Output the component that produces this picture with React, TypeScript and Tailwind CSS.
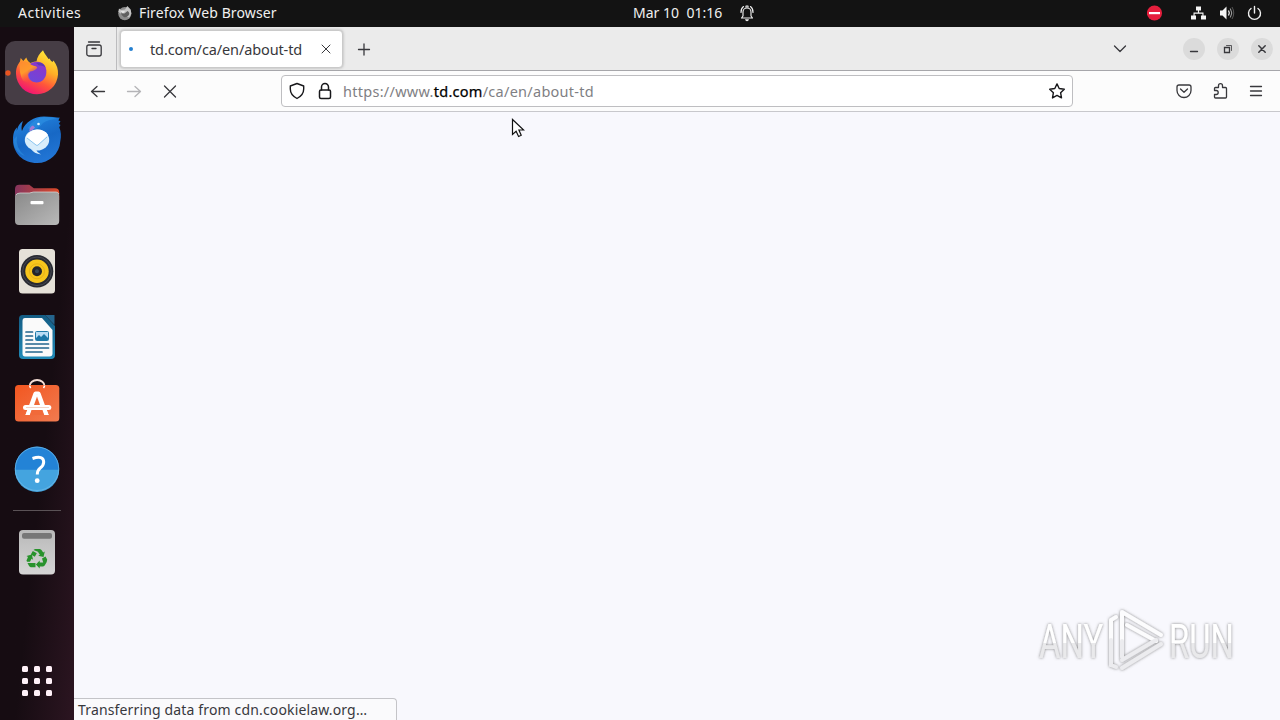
import type { ReactNode } from "react";

function Icon({ box, className, children }: { box: string; className: string; children: ReactNode }) {
  return (
    <svg viewBox={box} className={`block shrink-0 ${className}`} fill="none" stroke="currentColor" strokeWidth="1.3" strokeLinecap="round" strokeLinejoin="round">
      {children}
    </svg>
  );
}

function DockItem({ box, active, children }: { box: string; active?: boolean; children: ReactNode }) {
  return (
    <div className={`ml-[5px] size-16 shrink-0 rounded-[10px] ${active ? "bg-[#463d45]" : ""}`}>
      <svg viewBox={box} className="block size-16 overflow-visible">{children}</svg>
    </div>
  );
}

function TopBar() {
  return (
    <header className="flex h-[27px] shrink-0 items-center bg-[#131313] text-[14px] leading-[25px] text-[#f0f0f0]">
      <span className="ml-[18px] w-[99px] pb-[2px] tracking-[0.5px]">Activities</span>
      <svg viewBox="0 0 16 16" className="mb-0.5 size-4 shrink-0">
        <circle cx="7.8" cy="8.6" r="6.6" fill="#8c8c8c" />
        <path d="M1.300 7 2 3.500 4 5l4-.4L10.300 1l3.400 3.600.6 4-2 4-3.500-1z" fill="#c4c4c4" />
        <path d="M4 7.500l3.500 1 3-2.600q3 2 1 4.600t-4.700 1.400T4 7.500" fill="#5f5f5f" />
        <path d="M3.500 6h4.500l-2 2.800z" fill="#e4e4e4" />
      </svg>
      <span className="ml-[6px] w-[494px] pb-[2px] tracking-[0.12px]">Firefox Web Browser</span>
      <span className="w-[106px] whitespace-pre pb-[2px] tracking-[0.02px]">Mar 10  01:16</span>
      <Icon box="0 0 16 18" className="mb-0.5 h-[18px] w-4">
        <path d="M2.500 14h11L12 12V8a4 4 0 0 0-8 0v4zM2 8.500Q1.800 4.500 4.500 2.500M14 8.500q.2-4-2.500-6M7 3V2h2v1" strokeWidth="1.150" />
        <path d="M6 15.300h4q-.5 2-2 2t-2-2" fill="currentColor" stroke="none" />
      </Icon>
      <div className="mr-[18px] mb-0.5 ml-auto flex items-center">
        <svg viewBox="0 0 16 16" className="mr-7 size-4"><circle cx="7.500" cy="8" r="7.600" fill="#e51f3d" /><rect x="2" y="7" width="11" height="2.200" fill="#fff" /></svg>
        <svg viewBox="0.5 0 16 16" className="mr-3 size-4" fill="#f5f5f5"><path d="M5.500 1.500h5v4H8.600v2H13v3h2.500v4h-5v-4h1.400V8.700H4.100v1.800h1.400v4h-5v-4H3v-3h4.400v-2H5.500z" /></svg>
        <svg viewBox="0 0 16 16" className="mr-3 size-4" fill="none" stroke="#f5f5f5"><path d="M1 5.500h2.500l4-4v13l-4-4H1z" fill="#f5f5f5" stroke="none" /><path d="M9.500 5.500q1.600 2.500 0 5" strokeWidth="1.300" /><path d="M11.300 3.500q3 4.500 0 9" stroke="#aaa" /><path d="M13 2q3.500 6 0 12" stroke="#555" /></svg>
        <Icon box="0.5 0 16 16" className="mr-[-1px] size-4"><path d="M4.500 3.500a6 6 0 1 0 7 0M8 1.500V8" strokeWidth="1.400" /></Icon>
      </div>
    </header>
  );
}

function Dock() {
  return (
    <nav className="flex w-[74px] shrink-0 flex-col gap-0.5 bg-linear-to-br from-[#160c12] from-60% to-[#2c1521] pt-3.5">
      <svg width="0" height="0" className="absolute">
        <defs>
          <linearGradient id="fire" x1=".8" y1="0" x2=".3" y2="1"><stop stopColor="#fff23b" /><stop offset=".4" stopColor="#ffad26" /><stop offset=".68" stopColor="#ff553a" /><stop offset="1" stopColor="#f00f78" /></linearGradient>
          <linearGradient id="flame" x1="0" y1="0" x2=".5" y2="1"><stop stopColor="#ff8a30" /><stop offset=".5" stopColor="#ff9a2b" /><stop offset="1" stopColor="#ff503c" stopOpacity="0" /></linearGradient>
          <linearGradient id="globe" x1=".7" y1="0" x2=".2" y2="1"><stop stopColor="#8f35c8" /><stop offset="1" stopColor="#6a48dc" /></linearGradient>
          <linearGradient id="bird" x1=".3" y1="0" x2=".7" y2="1"><stop stopColor="#2384df" /><stop offset=".5" stopColor="#1768c5" /><stop offset="1" stopColor="#2377d7" /></linearGradient>
          <linearGradient id="folderback"><stop stopColor="#85345d" /><stop offset="1" stopColor="#dc4a29" /></linearGradient>
          <linearGradient id="folder" x2="1" y2="1"><stop stopColor="#898989" /><stop offset="1" stopColor="#b9b9b9" /></linearGradient>
          <linearGradient id="writer" y2="1" x2="0"><stop stopColor="#145c83" /><stop offset="1" stopColor="#218bb8" /></linearGradient>
          <linearGradient id="bag" x2="1" y2="1"><stop stopColor="#f25620" /><stop offset="1" stopColor="#f17b50" /></linearGradient>
          <linearGradient id="bin" x2="0" y2="1"><stop stopColor="#b9b9b9" /><stop offset="1" stopColor="#d5d5d5" /></linearGradient>
        </defs>
      </svg>
      <DockItem box="5 41 64 64" active>
        <circle cx="8" cy="73" r="2.700" fill="#e95420" />
        <path d="M43 50.300c1.500 3.500 3.500 5.500 5.500 8.700l1-.5c.8 1.500 1.500 2.500 3 3.500l1-1.500c3.500 4.500 4.800 9 4.500 14A21 21 0 0 1 37 94.300 21 21 0 0 1 16 74c-.2-6 1.700-9.500 4-12.500l.7-3.500 2.600 3 3-3.600c.8 2.500 2 4 4.200 5.600 3-1.500 4.500-1.500 6-1.500.4-4 3-8 6.500-11.200z" fill="url(#fire)" />
        <path d="M29 65q3-3.500 9-3.300 7.500 1 8.300 8.500.5 5.500-2.500 9-3 3.300-7.500 3.300-8-1-8.800-8z" fill="url(#globe)" />
        <path d="M20 61.500q4.500-1 9 1 2 3.300 7 3.800l1.300 1.200q-1.500 3-7 4-2.300 2-1.800 4.500 1.300 5 7.500 6.500-8 2-13-2-4.500-7-3-19" fill="url(#flame)" />
        <path d="M36 63q7-2 9.500 4.500-3-2.500-6.500-2z" fill="#5e38b5" />
      </DockItem>
      <DockItem box="5 107 64 64">
        <path d="M23 121c-2 5-1.500 8-1 10 3-9 12-14.500 22-14.500 7 0 12 1 16 1.300-1.500 1.200-1 2-1.500 3l2 .3-1.600 3 1.600.9-1.300 2.200c2 4 2.200 9 1.100 14A23.200 23.200 0 0 1 37 163c-14 0-24-10-24-23 0-8 2-10.500 4-12.500l-.2 3.500c1-5 3-8 6.200-10z" fill="url(#bird)" />
        <path d="M28 128q6-10 16-11 8 0 14 2-9 0-15 4-4 6-12 7M17 136q-2 12 8 20-13-5-11-17z" fill="#36a1ec" opacity=".4" />
        <ellipse cx="37" cy="140" rx="12.200" ry="10.500" fill="#d8edfb" />
        <path d="M26 137l10 8q1 1 2 0l10-10q-3-5.500-11-5.500-8 1-11 7.500z" fill="#fff" />
        <path d="M27 138l9 7q1 1 2 0l9-8" fill="none" stroke="#8cc6ef" />
        <path d="M31 149q3 4.500 10 5.500-4-2-5-5z" fill="#d8edfb" />
        <circle cx="38.500" cy="124" r="1.300" fill="#dff3ff" />
        <path d="M29.500 130q0-3 3.500-4.500l2 2q-2 3-6 4z" fill="#a679d1" />
      </DockItem>
      <DockItem box="5 173 64 64">
        <path d="M15 189q0-4.300 4.300-4.300h10l4.500 3.500H55q4.200 0 4.200 4V200H15z" fill="url(#folderback)" />
        <path d="M15 197q0-4 4-4h10l4-1h22q4.200 0 4.200 4v25q0 4-4 4H19q-4 0-4-4z" fill="url(#folder)" />
        <path d="M16 195q1-2 4-2h9.500l4-1H56q2 0 3 2" fill="none" stroke="#ddd" strokeWidth=".7" />
        <rect x="30.500" y="201" width="13" height="3.300" rx="1" fill="#fff" />
      </DockItem>
      <DockItem box="5 239 64 64">
        <rect x="19" y="249" width="36" height="44.500" rx="3.500" fill="#e5e1d8" />
        <circle cx="37" cy="271.300" r="16.300" fill="#282a31" /><circle cx="37" cy="271.300" r="14.300" fill="none" stroke="#5a5d68" strokeWidth=".6" />
        <circle cx="37" cy="271.300" r="11.700" fill="#f7c51c" /><circle cx="37" cy="271.300" r="7.500" fill="none" stroke="#dca817" strokeWidth=".7" /><circle cx="37" cy="271.300" r="5" fill="#24252a" /><circle cx="37" cy="271.300" r="2" fill="#384857" />
      </DockItem>
      <DockItem box="5 305 64 64">
        <path d="M22.500 315H45l10 11v29q0 4-4 4H23q-4 0-4-4v-36.500q0-3.500 3.500-3.500z" fill="url(#writer)" />
        <path d="M45 315h9.500v10z" fill="#24648c" />
        <path d="M25 318h17l10.500 12v23.500q0 3-3 3H25q-2.500 0-2.500-3V321q0-3 2.500-3z" fill="#fafafa" />
        <path d="M26 332h6.500M26 336h6.500M26 340h6.500M26 344h22.500M26 348h22.500M26 352h16" stroke="#23658d" strokeWidth="1.700" strokeLinecap="round" />
        <rect x="35.500" y="331.500" width="13" height="9" rx="1" fill="#b9dcf4" stroke="#207ba8" />
        <path d="M36 340v-2l3-3 2 2 3-3 4 4v2z" fill="#1c77a7" />
      </DockItem>
      <DockItem box="5 371 64 64">
        <path d="M29.700 388v-2a7.400 6 0 0 1 14.800 0v2" fill="none" stroke="#f5ded5" strokeWidth="2" />
        <rect x="15" y="385" width="44.300" height="36.500" rx="3.500" fill="url(#bag)" />
        <path d="M29.700 385.500a7.300 5.200 0 0 0 1 2.400M44.500 385.500a7 5 0 0 1-1 2.400" fill="none" stroke="#fff" strokeWidth="1.600" />
        <path d="m25.500 415 8-22q.5-1.500 2-1.500h3q1.500 0 2 1.500l8 22h-4.200L37 394.500 29.700 415z" fill="#fff" />
        <path d="m32 406 3.800-11h2.400L42 406z" fill="#fff" /><path d="m34 405 3-8.500 3 8.500z" fill="#ef6a38" />
        <path d="m32.500 410-2 5h13l-2-5z" fill="#f16a3a" />
        <path d="m43 410 1.600 5h4.200l-2-5zM31 410l-1.600 5h-4l2-5z" fill="#fff" />
        <rect x="23" y="405" width="28.300" height="5" rx="2.500" fill="#fff" /><path d="M26 407.500h23" stroke="#ecb6a0" strokeWidth=".6" />
      </DockItem>
      <DockItem box="5 437 64 64">
        <circle cx="37" cy="468.800" r="22.200" fill="#2383d6" /><path d="M14.800 470.500h44.400a22.200 22.200 0 0 1-44.400 0" fill="#44a4df" transform="translate(0 -.7)" /><circle cx="37" cy="468.800" r="21.700" fill="none" stroke="#70bce8" strokeWidth=".7" />
        <path d="M32.500 458.500q11-3.500 11.200 3.500 0 3.500-3.700 6.200-2.700 2.100-2.700 6.300" fill="none" stroke="#fff" strokeWidth="3" /><circle cx="37.200" cy="480.700" r="2.400" fill="#fff" />
      </DockItem>
      <div className="mx-[13px] mt-[7px] mb-[7px] h-px shrink-0 bg-[#5a5256]" />
      <DockItem box="5 520 64 64">
        <rect x="19" y="530" width="36" height="44.500" rx="4" fill="url(#bin)" /><rect x="22" y="533" width="30" height="5.800" rx="2" fill="#777" />
        <g fill="#28922c">
          <path d="m33.500 550 1.500-1h5l1.500 1 1.700 2.600 1.600-1-1.300 5.400-5.300-1.300 1.700-1-2-3zM32.800 551l4 2.200-2 3.500-4-2.300z" />
          <path d="m42 558.500 3.500-2 1.700 3-.5 2.500-2 3.500-1.500 1h-3.500v2l-3.800-4 3.800-4v2h3.500zM28 557l-1.500-1 5.300-1.400 1.300 5.200-1.600-1-1.500 3h-3l-.5-1.200zM27.500 563h8v4.200h-4.800l-1.500-1z" />
        </g>
      </DockItem>
      <div className="mt-auto mb-[24px] ml-[22px] grid w-[30px] grid-cols-3 gap-1.5">
        {Array.from({ length: 9 }, (_, i) => <i key={i} className="size-1.5 rounded-[1.5px] bg-[#fff1f8]" />)}
      </div>
    </nav>
  );
}

function TabBar() {
  return (
    <div className="flex h-11 shrink-0 border-b border-[#a6a6aa] bg-[#ebebeb] text-[#38383c]">
      <div className="flex w-[43px] items-center justify-center border-r border-[#bcbcbe] pr-[2px]">
        <Icon box="0 0 18 18" className="size-[18px]"><rect x="1.800" y="5" width="14.400" height="11" rx="2" /><path d="M3.500 2h11M7 8.500h4" /></Icon>
      </div>
      <div className="mt-[3px] ml-[3px] flex h-[38px] w-[223px] items-center rounded-[4px] border border-[#cacaca] bg-white shadow-[0_0_3px_#aaa]">
        <i className="ml-2 size-1 rounded-full bg-[#2580d0]" />
        <span className="ml-[17px] w-[170px] pt-[2px] text-[14.500px] tracking-[-0.12px]">td.com/ca/en/about-td</span>
        <Icon box="0 0 12 12" className="size-3"><path d="m2 2 8 8m0-8-8 8" strokeWidth="1" /></Icon>
      </div>
      <Icon box="0 0 18 18" className="mt-[13px] ml-[12px] size-[18px]"><path d="M3.500 9.500h11M9 4v11" /></Icon>
      <div className="mr-[7px] ml-auto flex items-center">
        <Icon box="0 0 16 16" className="mr-[55px] size-4"><path d="m2.500 5 5.500 5.500L13.500 5" /></Icon>
        <div className="flex gap-[12px]">
          <div className="flex size-[22px] items-center justify-center rounded-full bg-[#dbdbdb]"><Icon box="0 0 12 12" className="size-3"><path d="M2.500 8.500h7" /></Icon></div>
          <div className="flex size-[22px] items-center justify-center rounded-full bg-[#dbdbdb]"><Icon box="0 0 12 12" className="size-3"><path d="M2.500 4.500h5v5h-5z" strokeWidth="1.300" strokeLinejoin="miter" /><path d="M4.500 2.500h5v5" strokeWidth=".8" strokeLinejoin="miter" /></Icon></div>
          <div className="flex size-[22px] items-center justify-center rounded-full bg-[#dbdbdb]"><Icon box="0 0 12 12" className="size-3"><path d="m2.800 2.800 6.400 6.400m0-6.400-6.400 6.400" strokeWidth="1.500" /></Icon></div>
        </div>
      </div>
    </div>
  );
}

function Toolbar() {
  return (
    <div className="flex h-[41px] shrink-0 items-center border-b border-[#c8c8cc] bg-[#fcfcfc] pl-[15px] text-[#38383c]">
      <Icon box="0 0 18 18" className="size-[18px]"><path d="M15.500 9.500h-13m5.500-5-5.500 5 5.500 5" /></Icon>
      <Icon box="0 0 18 18" className="ml-[18px] size-[18px] text-[#b4b4b7]"><path d="M2.500 9.500h13m-5.500-5 5.500 5-5.500 5" /></Icon>
      <Icon box="0 0 18 18" className="ml-[18px] size-[18px]"><path d="m3.500 4 11 11m0-11-11 11" /></Icon>
      <div className="ml-[102px] flex h-8 w-[792px] items-center rounded-[4px] border border-[#bebec1] bg-white text-[#18181b]">
        <Icon box="0 0 18 18" className="ml-1.5 size-[18px]"><path d="M9 1.500 15.700 4v3q0 6-6.700 9.500Q2.300 13 2.300 7V4z" strokeWidth="1.400" /></Icon>
        <Icon box="0 0 18 18" className="ml-2.5 size-[18px]"><rect x="3.500" y="8" width="11" height="8.500" rx="1.500" strokeWidth="1.500" /><path d="M5.500 8V5a3.500 3.500 0 0 1 7 0v3" strokeWidth="1.500" /></Icon>
        <span className="ml-[9px] pt-[2px] text-[14.500px] tracking-[0.27px] text-[#7f7f84]">https://www.<span className="text-black [-webkit-text-stroke:0.25px_black]">td.com</span>/ca/en/about-td</span>
        <Icon box="0 0 18 18" className="mr-1.5 ml-auto size-[18px]"><path d="m9 1.900 2.200 4.600 5.100.7-3.700 3.500.9 5.200L9 13.400l-4.500 2.500.9-5.200L1.700 7.200l5.100-.7z" strokeWidth="1.400" /></Icon>
      </div>
      <div className="mr-[15px] ml-auto flex gap-[18px]">
        <Icon box="0 0 18 18" className="size-[18px]"><path d="M4 3h10q2 0 2 2v3.500a7 7 0 0 1-14 0V5q0-2 2-2zm1.500 4L9 10.300 12.500 7" /></Icon>
        <Icon box="0 0 18 18" className="size-[18px]"><path d="M3.500 8V6.500q0-1 1-1h3V3.700a2 2 0 0 1 4 0v1.800h3q1 0 1 1V15q0 1-1 1h-10q-1 0-1-1v-2.500h1.700a2 2 0 0 0 0-4H3.500z" /></Icon>
        <Icon box="0 0 18 18" className="size-[18px]"><path d="M3.500 4.500h11m-11 4.500h11m-11 4.500h11" /></Icon>
      </div>
    </div>
  );
}

function Watermark() {
  return (
    <svg viewBox="1030 600 210 80" className="absolute right-[40px] bottom-[40px] h-20 w-[210px]">
      <defs>
        <linearGradient id="mark" x2="0" y2="1"><stop offset=".52" stopColor="#fff" /><stop offset=".52" stopColor="#e9e9eb" /></linearGradient>
        <filter id="glow" x="-20%" y="-20%" width="140%" height="140%"><feDropShadow dx="0" dy="0" stdDeviation="1.700" floodColor="#666" floodOpacity=".8" /></filter>
      </defs>
      <g filter="url(#glow)">
        <g fill="url(#mark)" fontFamily="Roboto, sans-serif" fontSize="48">
          <text transform="translate(1039 658) scale(.69 1)" textLength="93" lengthAdjust="spacingAndGlyphs">ANY</text>
          <text transform="translate(1169 658) scale(.69 1)" textLength="94" lengthAdjust="spacingAndGlyphs">RUN</text>
        </g>
        <g fill="none" stroke="#fcfcfd" strokeWidth="4" strokeLinejoin="round" strokeLinecap="round">
          <path d="M1111 665v-45l5-3M1122 656v-44l39 23M1127 625l29 16" />
          <path d="m1122 668 39-24M1122 660l34-20M1111 640v25l5 2M1122 641v16" stroke="#ececef" />
        </g>
      </g>
    </svg>
  );
}

export default function App() {
  return (
    <div className="relative flex h-[720px] w-[1280px] flex-col overflow-hidden font-['Noto_Sans',sans-serif]">
      <TopBar />
      <div className="flex min-h-0 flex-1">
        <Dock />
        <main className="flex min-w-0 flex-1 flex-col bg-[#f8f8fd]">
          <TabBar />
          <Toolbar />
          <div className="relative flex flex-1 flex-col justify-end">
            <Watermark />
            <div className="h-[22px] w-[323px] rounded-tr-[4px] border-t border-r border-[#c4c4c8] bg-[#fafafc] pl-1 text-[14px] leading-[22px] tracking-[0.15px] text-[#38383c]">Transferring data from cdn.cookielaw.org…</div>
          </div>
        </main>
      </div>
      <svg viewBox="0 0 14 20" className="absolute top-[118px] left-[511px] h-5 w-3.5"><path d="M1.500 1.500v15l3.600-3.200 2.500 5.200 2.600-1.200L7.900 12h4.800z" fill="#fff" stroke="#111" strokeWidth="1.200" /></svg>
    </div>
  );
}
